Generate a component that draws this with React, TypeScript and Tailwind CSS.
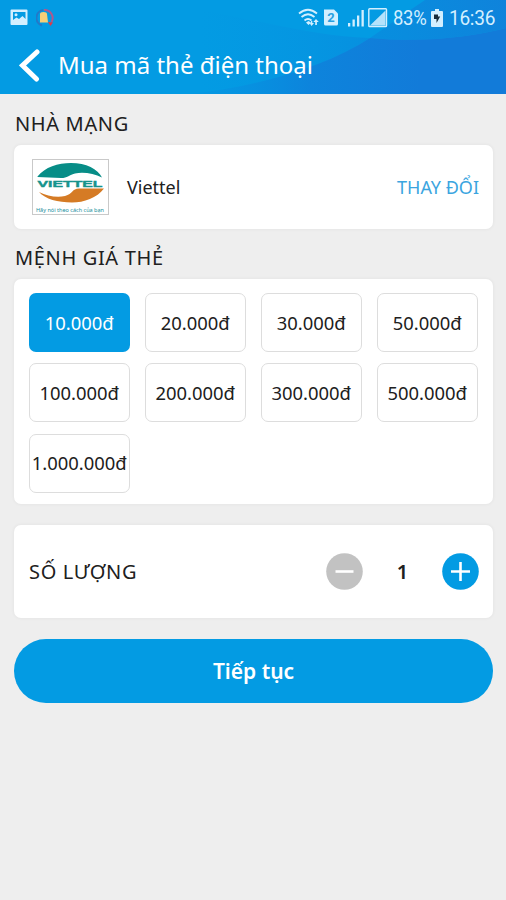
import React from 'react';

const amounts = ['10.000đ', '20.000đ', '30.000đ', '50.000đ', '100.000đ', '200.000đ', '300.000đ', '500.000đ', '1.000.000đ'];

function HeaderWaves() {
  return (
    <svg className="absolute inset-0" width="506" height="94" viewBox="0 0 506 94">
      <defs>
        <linearGradient id="sweep" gradientUnits="userSpaceOnUse" x1="200" y1="0" x2="420" y2="0">
          <stop offset="0" stopColor="#0790e0" stopOpacity="0.3" />
          <stop offset="0.5" stopColor="#0d84dc" />
          <stop offset="1" stopColor="#127bd9" />
        </linearGradient>
        <linearGradient id="band" gradientUnits="userSpaceOnUse" x1="200" y1="0" x2="380" y2="0">
          <stop offset="0" stopColor="#0596e2" stopOpacity="0" />
          <stop offset="1" stopColor="#078fdf" />
        </linearGradient>
        <linearGradient id="corner" gradientUnits="userSpaceOnUse" x1="370" y1="38" x2="506" y2="0">
          <stop offset="0" stopColor="#078fdf" />
          <stop offset="1" stopColor="#0f83db" />
        </linearGradient>
      </defs>
      <path d="M200 10C265 22 315 36 370 38C340 57 300 75 250 84C225 89 200 91 170 94Z" fill="url(#band)" />
      <path d="M425 0C404 14 386 27 370 38C425 43 470 37 506 28V0Z" fill="url(#corner)" />
      <path d="M190 94C260 86 325 67 370 38C425 43 470 37 506 28V94Z" fill="url(#sweep)" />
    </svg>
  );
}

function StatusBar() {
  return (
    <div className="relative flex h-[35px] items-center text-[#d3efff]">
      <svg className="ml-[10px]" width="18" height="17" viewBox="0 0 18 17">
        <path fillRule="evenodd" d="M1.5 0.5H16.5Q17.5 .5 17.5 1.5V15Q17.5 16 16.5 16H1.5Q.5 16 .5 15V1.5Q.5 .5 1.5 .5ZM3 3V11L6.5 8.5L9 10L12.5 7L15.5 10V3Z" fill="currentColor" />
        <circle cx="6" cy="5.7" r="1.5" fill="currentColor" />
      </svg>
      <svg className="ml-[8px]" width="18" height="18" viewBox="0 0 18 18">
        <path d="M7 1A8 8 0 0 0 6 16.5" fill="none" stroke="#2478c8" strokeWidth="2" />
        <path d="M8 1A8 8 0 0 1 15.5 13" fill="none" stroke="#b0588c" strokeWidth="2" />
        <path d="M12 13L17 13.5L14.5 17Z" fill="#e23945" />
        <path d="M4 5Q4 3 7.5 3Q11 3 11 5L12 13.5H4Z" fill="#f6cf78" />
      </svg>
      <svg className="ml-[244px]" width="91" height="20" viewBox="298 8 91 20">
        <g fill="none" stroke="currentColor" strokeWidth="1.8">
          <path d="M299 13.5Q308 6 317 13.5M301.5 17Q308 11.5 314.5 17M304.5 20.5Q308 17.5 311.5 20.5" />
        </g>
        <path d="M306 22.5L308.5 25L311 22.5L308.5 21ZM311 21H312.3V23H314L311.6 26L309.5 23H311ZM316 19L318.8 22H316.9V25H315.2V22H313.3Z" fill="currentColor" />
        <path d="M324 9.5H334L338 13.5V24Q338 25.5 336.5 25.5H325.5Q324 25.5 324 24Z" fill="currentColor" />
        <text x="331" y="22" fontSize="13" fontWeight="700" textAnchor="middle" fill="#299fdf" className="font-['Roboto',sans-serif]">2</text>
        <path d="M348 23H350.3V26.5H348ZM352.5 19.5H354.8V26.5H352.5ZM357 15.5H359.3V26.5H357ZM361.5 10H363.8V26.5H361.5Z" fill="currentColor" />
        <rect x="368.8" y="8.8" width="17.7" height="17.7" rx="0.8" fill="none" stroke="currentColor" strokeWidth="1.4" />
        <path d="M370 25.5L385.5 10.5V25.5Z" fill="currentColor" opacity=".85" />
      </svg>
      <span className="ml-[4px] w-[34px] origin-left scale-x-[.9] whitespace-nowrap pt-[1px] text-[20.5px] leading-none tracking-[-0.3px] font-['Roboto',sans-serif]">83%</span>
      <svg className="ml-[4px]" width="12" height="18" viewBox="0 0 12 18">
        <path d="M4 0H8V2H11Q12 2 12 3V17Q12 18 11 18H1Q0 18 0 17V3Q0 2 1 2H4Z" fill="currentColor" />
        <path d="M3 5.5H7V7.5H9.2L5.5 14V10H3Z" fill="#162b3a" />
      </svg>
      <span className="ml-[6px] w-[50px] origin-left scale-x-[.93] whitespace-nowrap pt-[1px] text-[20.5px] leading-none tracking-[-0.3px] font-['Roboto',sans-serif]">16:36</span>
    </div>
  );
}

function ViettelLogo() {
  return (
    <svg width="78" height="57" viewBox="0 0 78 57">
      <rect x=".5" y=".5" width="76" height="55" fill="#fff" stroke="#c9c9c9" />
      <path d="M5.5 17.5C13 8 26 4 39 4C54 4 66 10 70 18.5C62 14.5 51 12.5 43 14.5C36 16.5 36 19 29 19L5.5 18Z" fill="#078d87" />
      <path d="M7 33C15 37 25 39 33 37C41 35 40 29.5 47 29.5H72C65 39 52 43.5 40 43.5C26 43.5 13 40 7 33Z" fill="#d57b25" />
      <text x="5.5" y="27.8" textLength="65" lengthAdjust="spacingAndGlyphs" fontSize="9.5" fontWeight="700" fill="#16938c" stroke="#16938c" strokeWidth=".4" className="font-['Liberation_Sans',sans-serif]">VIETTEL</text>
      <text x="4" y="52.5" textLength="68" lengthAdjust="spacingAndGlyphs" fontSize="5.5" fill="#168e9c" className="font-['Noto_Sans',sans-serif]">Hãy nói theo cách của bạn</text>
    </svg>
  );
}

const card = 'ml-[14px] mr-[13px] rounded-[7px] bg-white shadow-[0_0_3px_1px_rgba(0,0,0,0.035)]';
const heading = 'flex items-center pt-[8px] pl-[15px] text-[20px] leading-none tracking-[0.65px]';

export default function App() {
  return (
    <main className="h-[900px] w-[506px] overflow-hidden bg-[#eeeeee] text-[#202020] font-['Noto_Sans',sans-serif]">
      <header className="relative h-[94px] bg-[#039be3]">
        <HeaderWaves />
        <StatusBar />
        <div className="relative flex h-[60px] items-center text-white">
          <svg className="ml-[19px]" width="22" height="33" viewBox="0 0 22 33">
            <path d="M18 3L3.5 16.5L17.5 30" fill="none" stroke="currentColor" strokeWidth="5" strokeLinecap="round" />
          </svg>
          <h1 className="ml-[17px] whitespace-nowrap text-[24px] leading-none">Mua mã thẻ điện thoại</h1>
        </div>
      </header>
      <h2 className={`${heading} h-[51px]`}>NHÀ MẠNG</h2>
      <section className={`${card} flex h-[84px] items-center pr-[14px] pl-[18px]`}>
        <ViettelLogo />
        <span className="ml-[17px] text-[18px]">Viettel</span>
        <button className="ml-auto whitespace-nowrap text-[18px] text-[#3ba5df]">THAY ĐỔI</button>
      </section>
      <h2 className={`${heading} h-[50px]`}>MỆNH GIÁ THẺ</h2>
      <section className={`${card} grid h-[225px] grid-cols-[repeat(4,101.5px)] content-start gap-x-[14.5px] gap-y-[11.3px] pt-[14px] pl-[14.5px]`}>
        {amounts.map((amount, i) => (
          <button key={amount} className={`flex h-[59px] items-center justify-center rounded-[7px] text-[18.4px] whitespace-nowrap ${i === 0 ? 'bg-[#039be3] text-white' : 'border-[1.5px] border-[#dddddd] bg-white'}`}>
            {amount}
          </button>
        ))}
      </section>
      <section className={`${card} mt-[21px] flex h-[93px] items-center pr-[14px] pl-[15px]`}>
        <span className="text-[20px] tracking-[0.65px]">SỐ LƯỢNG</span>
        <button className="ml-auto" aria-label="-">
          <svg width="37" height="37" viewBox="0 0 37 37"><circle cx="18.5" cy="18.5" r="18.3" fill="#c2c2c2" /><path d="M9.5 18.5H27.5" stroke="#fff" strokeWidth="2.6" /></svg>
        </button>
        <span className="w-[79px] text-center text-[20px] font-semibold">1</span>
        <button aria-label="+">
          <svg width="37" height="37" viewBox="0 0 37 37"><circle cx="18.5" cy="18.5" r="18.3" fill="#039be3" /><path d="M9 18.5H28M18.5 9V28" stroke="#fff" strokeWidth="2.6" /></svg>
        </button>
      </section>
      <button className="mx-[14px] mt-[21px] flex h-[64px] w-[479px] items-center justify-center rounded-full bg-[#039be3] pt-[2px] text-[21px] font-semibold text-white">Tiếp tục</button>
    </main>
  );
}
